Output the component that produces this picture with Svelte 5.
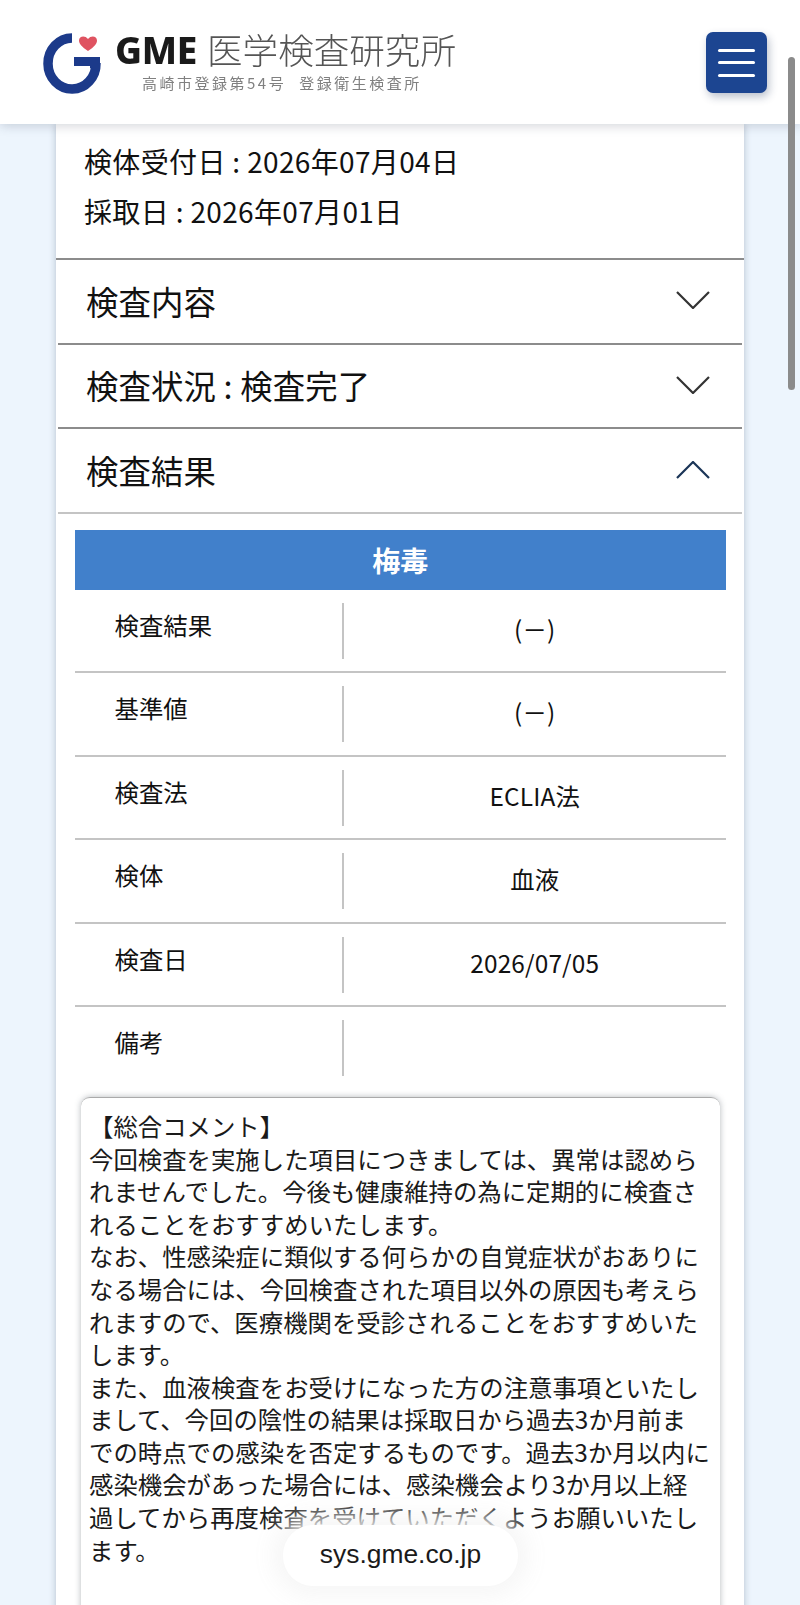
<script>
  const rows = [
    ['検査結果', '(－)'],
    ['基準値', '(－)'],
    ['検査法', 'ECLIA法'],
    ['検体', '血液'],
    ['検査日', '2026/07/05'],
    ['備考', '']
  ];
  const lines = [
    '今回検査を実施した項目につきましては、異常は認めら',
    'れませんでした。今後も健康維持の為に定期的に検査さ',
    'れることをおすすめいたします。',
    'なお、性感染症に類似する何らかの自覚症状がおありに',
    'なる場合には、今回検査された項目以外の原因も考えら',
    'れますので、医療機関を受診されることをおすすめいた',
    'します。',
    'また、血液検査をお受けになった方の注意事項といたし',
    'まして、今回の陰性の結果は採取日から過去3か月前ま',
    'での時点での感染を否定するものです。過去3か月以内に',
    '感染機会があった場合には、感染機会より3か月以上経',
    '過してから再度検査を受けていただくようお願いいたし',
    'ます。'
  ];
</script>

<div class="page">
  <header class="header">
    <div class="logo">
      <svg class="mark" viewBox="0 0 60 62" width="60" height="62" aria-hidden="true">
        <path d="M29 6 A24 25.5 0 1 0 53 31" fill="none" stroke="#1c3a8a" stroke-width="9.5"/>
        <path d="M31 25 H57 V34 Q57 38 56 40 L47 36 V34 H31 Z" fill="#1c3a8a"/>
        <path d="M45 19 C39 15 36 12 36 8.500 C36 4 42 3 45 7 C48 3 54 4 54 8.500 C54 12 51 15 45 19 Z" fill="#df5361"/>
      </svg>
      <div class="logo-text">
        <div class="logo-top"><span class="gme">GME</span><span class="lab">医学検査研究所</span></div>
        <div class="logo-sub"><span>高崎市登録第54号</span><span>登録衛生検査所</span></div>
      </div>
    </div>
    <button class="menu" aria-label="メニュー"><i></i><i></i><i></i></button>
  </header>

  <main class="card">
    <div class="dates">
      <p>検体受付日 : 2026年07月04日</p>
      <p>採取日 : 2026年07月01日</p>
    </div>

    <div class="acc closed">
      <span>検査内容</span>
      <svg class="chev" viewBox="0 0 34 18" width="34" height="18"><path d="M1 1 L17 17 L33 1" /></svg>
    </div>
    <div class="acc closed">
      <span>検査状況 : 検査完了</span>
      <svg class="chev" viewBox="0 0 34 18" width="34" height="18"><path d="M1 1 L17 17 L33 1" /></svg>
    </div>
    <div class="acc open">
      <span>検査結果</span>
      <svg class="chev up" viewBox="0 0 34 18" width="34" height="18"><path d="M1 17 L17 1 L33 17" /></svg>
    </div>

    <section class="result">
      <h2>梅毒</h2>
      <div class="table">
        {#each rows as [label, value], i}
          <div class="row" class:last={i === rows.length - 1}>
            <div class="label">{label}</div>
            <div class="value">{value}</div>
          </div>
        {/each}
      </div>

      <div class="comment">
        <div class="heading">【総合コメント】</div>
        {#each lines as line}
          <div class="line">{line}</div>
        {/each}
      </div>
    </section>
  </main>

  <div class="scrollbar"></div>
  <div class="url">sys.gme.co.jp</div>
</div>

<style>
  :global(body) {
    margin: 0;
    background: #edf5fd;
  }

  .page {
    position: relative;
    width: 800px;
    height: 1605px;
    overflow: hidden;
    display: flex;
    flex-direction: column;
    background: #edf5fd;
    font-family: "Noto Sans CJK JP", "Noto Sans", sans-serif;
    color: #111;
  }

  .header {
    position: relative;
    z-index: 2;
    flex: none;
    height: 124px;
    box-sizing: border-box;
    padding: 32px 33px 0 43px;
    display: flex;
    justify-content: space-between;
    align-items: flex-start;
    background: #fff;
    box-shadow: 0 2px 10px rgba(60, 70, 90, 0.22);
  }

  .logo {
    display: flex;
    align-items: flex-start;
    gap: 12px;
  }

  .mark {
    display: block;
    flex: none;
  }

  .logo-text {
    filter: blur(0.4px);
  }

  .logo-top {
    display: flex;
    align-items: center;
    gap: 10px;
    height: 36px;
    white-space: nowrap;
  }

  .gme {
    font-family: "Noto Sans", sans-serif;
    font-weight: 800;
    font-size: 37px;
    color: #1a1a1a;
    line-height: 36px;
    letter-spacing: -0.3px;
  }

  .lab {
    font-size: 35.6px;
    line-height: 36px;
    font-weight: 300;
    color: #555;
    position: relative;
    top: -1px;
  }

  .logo-sub {
    display: flex;
    gap: 13px;
    margin: 5px 0 0 27px;
    font-size: 15px;
    line-height: 20px;
    letter-spacing: 2.5px;
    color: #808080;
    white-space: nowrap;
  }

  .menu {
    width: 61px;
    height: 61px;
    padding: 0;
    border: 0;
    border-radius: 7px;
    background: #1c4591;
    box-shadow: 2px 4px 8px rgba(30, 50, 90, 0.3);
    display: flex;
    flex-direction: column;
    align-items: center;
    justify-content: center;
    gap: 9.500px;
  }

  .menu i {
    display: block;
    width: 37px;
    height: 3px;
    border-radius: 2px;
    background: #fff;
  }

  .card {
    flex: none;
    width: 688px;
    margin-left: 56px;
    background: #fff;
    box-shadow: 0 0 7px rgba(90, 110, 130, 0.4);
  }

  .dates {
    box-sizing: border-box;
    height: 136px;
    padding: 12px 0 0 28px;
    border-bottom: 2px solid #8c8c8c;
  }

  .dates p {
    margin: 0;
    font-size: 28px;
    line-height: 50px;
    letter-spacing: 0.35px;
  }

  .acc {
    box-sizing: border-box;
    height: 84.5px;
    margin: 0 2px;
    padding: 0 32px 2px 28px;
    display: flex;
    align-items: center;
    justify-content: space-between;
    font-size: 32.4px;
    letter-spacing: 0.15px;
    border-bottom: 2px solid #8c8c8c;
  }

  .acc.open {
    border-bottom-color: #c4c4c4;
    height: 85px;
  }

  .chev {
    display: block;
    flex: none;
  }

  .chev path {
    fill: none;
    stroke: #333;
    stroke-width: 2.2;
  }

  .chev.up path {
    stroke: #1b3557;
  }

  .result {
    padding: 16px 18px 0 18.5px;
  }

  h2 {
    margin: 0;
    height: 60px;
    background: #4180cb;
    color: #fff;
    font-size: 28px;
    font-weight: 700;
    line-height: 60px;
    text-align: center;
  }

  .row {
    box-sizing: border-box;
    height: 83.4px;
    padding-top: 13px;
    display: grid;
    grid-template-columns: 269px 1fr;
    border-bottom: 2px solid #c4c4c4;
    align-items: start;
  }

  .row.last {
    border-bottom: 0;
    height: 69px;
  }

  .label,
  .value {
    height: 56px;
    font-size: 24.4px;
  }

  .label {
    padding-left: 40px;
    line-height: 44px;
    border-right: 2px solid #c4c4c4;
  }

  .value {
    line-height: 52px;
    text-align: center;
    letter-spacing: 0.15px;
  }

  .comment {
    box-sizing: border-box;
    width: 639px;
    height: 800px;
    margin: 21px 0 0 6.500px;
    padding: 12px 6px 0 8px;
    background: #fff;
    border-radius: 9px;
    border-top: 1px solid #aaa;
    box-shadow: 0 0 6px rgba(70, 80, 90, 0.4);
    font-size: 24.4px;
    line-height: 32.600px;
    color: #1a1a1a;
  }

  .line {
    white-space: nowrap;
  }

  .scrollbar {
    position: absolute;
    z-index: 3;
    top: 57px;
    left: 788px;
    width: 7px;
    height: 333px;
    border-radius: 4px;
    background: #8b8b8b;
  }

  .url {
    position: absolute;
    z-index: 3;
    left: 283px;
    top: 1525px;
    width: 235px;
    height: 61px;
    border-radius: 30px;
    background: #fff;
    box-shadow: 0 0 22px 10px rgba(245, 245, 245, 0.95);
    font-family: "Liberation Sans", sans-serif;
    font-size: 26.4px;
    line-height: 58px;
    text-align: center;
    color: #1a1a1a;
  }
</style>
